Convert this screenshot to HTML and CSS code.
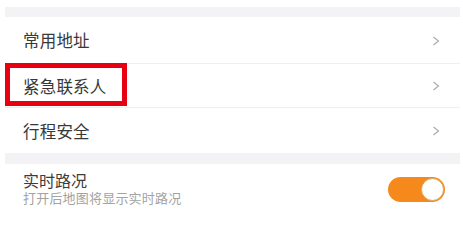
FILE: index.html
```html
<!DOCTYPE html>
<html lang="zh">
<head>
<meta charset="utf-8">
<link rel="stylesheet" href="styles.css">
</head>
<body>
<div class="page">
  <div class="band band-top"></div>
  <div class="row row-first">
    <span class="label">常用地址</span>
    <svg class="chev" width="8" height="10" viewBox="0 0 8 10"><path d="M1.5 1 L6.5 5 L1.5 9" fill="none" stroke="#a8a8a8" stroke-width="1.1"/></svg>
  </div>
  <div class="row row-mid">
    <span class="label">紧急联系人</span>
    <svg class="chev" width="8" height="10" viewBox="0 0 8 10"><path d="M1.5 1 L6.5 5 L1.5 9" fill="none" stroke="#a8a8a8" stroke-width="1.1"/></svg>
  </div>
  <div class="row row-last">
    <span class="label">行程安全</span>
    <svg class="chev" width="8" height="10" viewBox="0 0 8 10"><path d="M1.5 1 L6.5 5 L1.5 9" fill="none" stroke="#a8a8a8" stroke-width="1.1"/></svg>
  </div>
  <div class="band band-mid"></div>
  <div class="row-switch">
    <div class="texts">
      <div class="title">实时路况</div>
      <div class="sub">打开后地图将显示实时路况</div>
    </div>
    <div class="toggle"><div class="knob"></div></div>
  </div>
  <div class="highlight"></div>
</div>
</body>
</html>
```
FILE: styles.css
```css
html, body {
  margin: 0;
  padding: 0;
  background: #ffffff;
}
body {
  width: 463px;
  height: 207px;
  overflow: hidden;
  font-family: "Noto Sans CJK SC", "Noto Sans", sans-serif;
}
.page {
  position: relative;
  padding: 7px 3px 0 5px;
}
.band {
  background: #f3f3f5;
  height: 10px;
}
.band-mid {
  height: 11px;
}
.row {
  display: flex;
  align-items: center;
  justify-content: space-between;
  padding: 0 20px 0 18px;
  border-bottom: 1px solid #efefef;
}
.row-first { height: 46px; }
.row-mid { height: 43px; }
.row-last { height: 45px; border-bottom: none; }
.label {
  font-size: 16.5px;
  color: #383838;
  letter-spacing: 0.2px;
}
.chev {
  display: block;
  margin-top: 1px;
}
.row-switch {
  display: flex;
  align-items: center;
  justify-content: space-between;
  padding: 7px 15px 0 18px;
}
.title {
  font-size: 16px;
  line-height: 19px;
  color: #3c3c3c;
}
.sub {
  font-size: 13px;
  line-height: 16px;
  color: #a3a3a3;
  letter-spacing: 0.2px;
}
.toggle {
  width: 57px;
  height: 25px;
  border-radius: 13px;
  background: #f5891c;
  display: flex;
  align-items: center;
  justify-content: flex-end;
  padding-right: 1px;
  box-sizing: border-box;
  margin-top: 1px;
}
.knob {
  width: 23px;
  height: 23px;
  border-radius: 50%;
  background: #ffffff;
  border: 1px solid #d9a860;
  box-sizing: border-box;
}
.highlight {
  position: absolute;
  left: 5px;
  top: 63px;
  width: 122px;
  height: 43px;
  border: 5px solid #e60012;
  box-sizing: border-box;
}
```
